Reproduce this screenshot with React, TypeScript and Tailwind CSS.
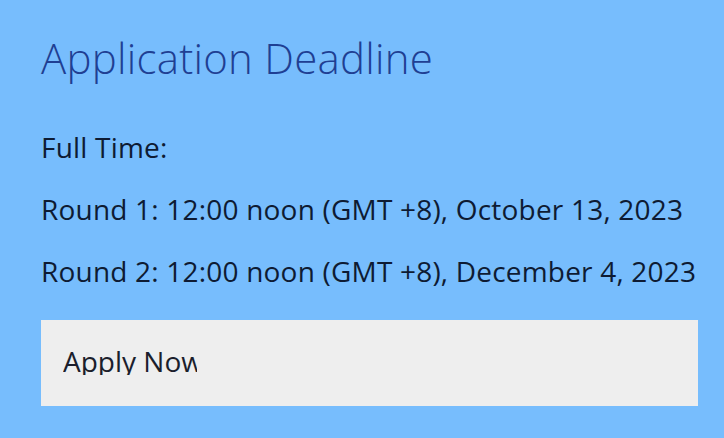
import React from "react";

export default function App() {
  return (
    <div
      className="w-[724px] h-[438px] bg-[#77bdfd] overflow-hidden pl-[41px] pr-[26px] pt-[37px]"
      style={{ fontFamily: '"Open Sans", "Noto Sans", sans-serif' }}
    >
      <h1 className="text-[42px] leading-[42px] font-light tracking-[0.25px] text-[#1f3f93] whitespace-nowrap">
        Application Deadline
      </h1>
      <div className="mt-[54px] flex flex-col gap-[34px] text-[28px] leading-[28px] tracking-[0.2px] text-[#0e1b33] whitespace-nowrap">
        <p>Full Time:</p>
        <p>Round 1: 12:00 noon (GMT +8), October 13, 2023</p>
        <p>Round 2: 12:00 noon (GMT +8), December 4, 2023</p>
      </div>
      <div className="mt-[35px] h-[86px] bg-[#eeeeee] pl-[22px] pt-[27px]">
        <span className="inline-block w-[134px] overflow-hidden whitespace-nowrap text-[28px] leading-[28px] text-[#1b1e2c]">
          Apply Now
        </span>
      </div>
    </div>
  );
}
